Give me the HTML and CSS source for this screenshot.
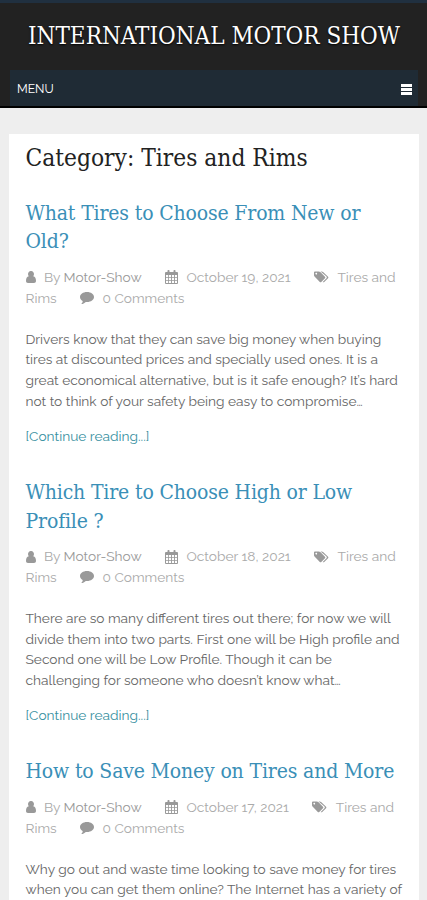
FILE: index.html
```html
<!DOCTYPE html>
<html lang="en">
<head>
  <meta charset="UTF-8" />
  <meta name="viewport" content="width=device-width, initial-scale=1.0" />
  <title>Tires and Rims - International Motor Show</title>
  <link rel="stylesheet" href="styles.css">
</head>
<body>
  <!-- icons -->
  <svg class="sprite" width="0" height="0">
    <symbol id="user" viewBox="0 0 10 12"><path d="M5 0a2.800 3.100 0 0 1 2.200 5.200C9.200 5.500 10 7.400 10 10c0 1.200-.8 2-2 2H2c-1.200 0-2-.8-2-2 0-2.600.8-4.500 2.800-4.800A2.800 3.100 0 0 1 5 0z"/></symbol>
    <symbol id="calendar" viewBox="0 0 13 14"><path fill-rule="evenodd" d="M1 2h1.500V.8q0-.8.8-.8h.5q.7 0 .7.800V2h4V.8q0-.8.7-.8h.5q.8 0 .8.800V2H12q1 0 1 1v10q0 1-1 1H1q-1 0-1-1V3q0-1 1-1zM1 5v2.200h2.200V5zm3 0v2.200h2.100V5zm3 0v2.200h2.100V5zm3 0v2.200h2V5zM1 8v2.200h2.200V8zm3 0v2.200h2.100V8zm3 0v2.200h2.100V8zm3 0v2.200h2V8zM1 11v2h2.200v-2zm3 0v2h2.100v-2zm3 0v2h2.100v-2zm3 0v2h2v-2z"/></symbol>
    <symbol id="tags" viewBox="0 0 16 12"><path fill-rule="evenodd" d="M0 1q0-1 1-1h4q1 0 1.700.7l5 5q.8.800 0 1.500l-4 4q-.8.700-1.500 0L.8 5.800Q0 5 0 4.200zM2.400 1.500a.9.900 0 1 0 .01 0z"/><path d="M7 0h1q1 0 1.700.7l5.300 5q.8.800 0 1.500l-4.100 4q-.9.700-1.600.1l4-4.100q.9-.8 0-1.700z"/></symbol>
    <symbol id="comment" viewBox="0 0 14 12"><path d="M7 0c4 0 7 2.200 7 5s-3 5-7 5l-1.200-.1C4.500 11.200 3 11.900 1.300 12c.8-.7 1.400-1.700 1.400-2.900C1 8.200 0 6.700 0 5c0-2.800 3-5 7-5z"/></symbol>
  </svg>

  <header class="site-header">
    <div class="site-title">INTERNATIONAL MOTOR SHOW</div>
    <nav class="menu">
      <span>MENU</span>
      <span class="bars"><i></i><i></i><i></i></span>
    </nav>
  </header>

  <main class="content">
    <h1>Category: Tires and Rims</h1>

    <article class="post">
      <h2><a href="#">What Tires to Choose From New or<br>Old?</a></h2>
      <div class="meta">
        <div class="meta-row">
          <span><svg class="user"><use href="#user"/></svg>By <a href="#">Motor-Show</a></span>
          <span><svg class="calendar"><use href="#calendar"/></svg>October 19, 2021</span>
          <span><svg class="tags"><use href="#tags"/></svg>Tires and</span>
        </div>
        <div class="meta-row">
          <span>Rims</span>
          <span><svg class="comment"><use href="#comment"/></svg>0 Comments</span>
        </div>
      </div>
      <p>Drivers know that they can save big money when buying<br>tires at discounted prices and specially used ones. It is a<br>great economical alternative, but is it safe enough? It’s hard<br>not to think of your safety being easy to compromise…</p>
      <a class="more" href="#">[Continue reading...]</a>
    </article>

    <article class="post">
      <h2><a href="#">Which Tire to Choose High or Low<br>Profile ?</a></h2>
      <div class="meta">
        <div class="meta-row">
          <span><svg class="user"><use href="#user"/></svg>By <a href="#">Motor-Show</a></span>
          <span><svg class="calendar"><use href="#calendar"/></svg>October 18, 2021</span>
          <span><svg class="tags"><use href="#tags"/></svg>Tires and</span>
        </div>
        <div class="meta-row">
          <span>Rims</span>
          <span><svg class="comment"><use href="#comment"/></svg>0 Comments</span>
        </div>
      </div>
      <p>There are so many different tires out there; for now we will<br>divide them into two parts. First one will be High profile and<br>Second one will be Low Profile. Though it can be<br>challenging for someone who doesn’t know what…</p>
      <a class="more" href="#">[Continue reading...]</a>
    </article>

    <article class="post">
      <h2><a href="#">How to Save Money on Tires and More</a></h2>
      <div class="meta">
        <div class="meta-row">
          <span><svg class="user"><use href="#user"/></svg>By <a href="#">Motor-Show</a></span>
          <span><svg class="calendar"><use href="#calendar"/></svg>October 17, 2021</span>
          <span><svg class="tags"><use href="#tags"/></svg>Tires and</span>
        </div>
        <div class="meta-row">
          <span>Rims</span>
          <span><svg class="comment"><use href="#comment"/></svg>0 Comments</span>
        </div>
      </div>
      <p>Why go out and waste time looking to save money for tires<br>when you can get them online? The Internet has a variety of</p>
    </article>
  </main>
</body>
</html>
```
FILE: styles.css
```css
* {
  box-sizing: border-box;
}

body {
  margin: 0;
  height: 900px;
  overflow: hidden;
  background: #eee;
  color: #666;
  font-family: Raleway, Lato, sans-serif;
  font-size: 13.72px;
  line-height: 20.65px;
}

a {
  color: inherit;
  text-decoration: none;
}

.sprite {
  display: none;
}

.site-header {
  height: 108px;
  padding: 0 9px 0 10px;
  background: #222;
  border-top: 3px solid #203040;
  border-bottom: 2px solid #000;
}

.site-title {
  height: 67px;
  line-height: 66px;
  color: #fff;
  font-family: "Roboto Slab", "DejaVu Serif Condensed", "DejaVu Serif", serif;
  font-stretch: condensed;
  font-size: 24px;
  text-align: center;
  text-shadow: 0 1px 2px #000;
  white-space: nowrap;
}

.menu {
  display: flex;
  justify-content: space-between;
  align-items: center;
  height: 36px;
  padding: 3px 6px 0 7px;
  background: #1f2b35;
  color: #fff;
  font-size: 12.2px;
}

.bars {
  display: flex;
  flex-direction: column;
  gap: 1.5px;
}

.bars i {
  width: 11px;
  height: 2.5px;
  background: #fff;
}

.content {
  height: 800px;
  margin: 26px 8px 0 9px;
  padding: 9px 0 0 16.5px;
  background: #fff;
  white-space: nowrap;
}

h1, h2 {
  margin: 0;
  font-family: "Roboto Slab", "DejaVu Serif Condensed", "DejaVu Serif", serif;
  font-stretch: condensed;
  font-weight: 400;
}

h1 {
  margin-bottom: 25.8px;
  color: #222;
  font-size: 24.3px;
  line-height: 30px;
}

h2 {
  margin-bottom: 11.3px;
  color: #3a8fb7;
  font-size: 21px;
  line-height: 28.5px;
  letter-spacing: -0.16px;
}

.post {
  margin-bottom: 31.4px;
}

.meta {
  margin-bottom: 20.2px;
  color: #aaa;
}

.meta a {
  color: #999;
}

.meta-row {
  display: flex;
  gap: 23.5px;
}

.meta-row span {
  display: flex;
  align-items: center;
  white-space: pre;
}

.meta svg {
  fill: #999;
  margin-right: 8.4px;
}

.user {
  width: 10px;
  height: 12px;
}

.calendar {
  width: 13px;
  height: 14px;
}

.tags {
  width: 15px;
  height: 12px;
}

.comment {
  width: 14px;
  height: 12px;
}

p {
  margin: 0 0 14.8px;
}

.more {
  display: block;
  color: #38909f;
}
```
